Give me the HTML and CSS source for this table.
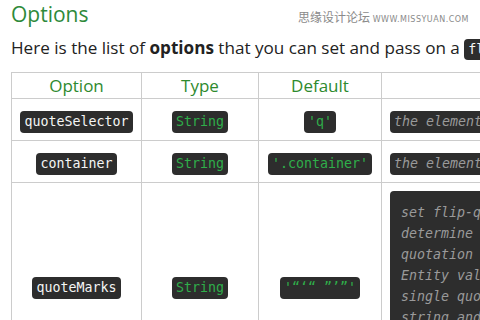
FILE: index.html
```html
<!DOCTYPE html>
<html lang="en">
<head>
    <meta charset="UTF-8">
    <title>Options</title>
    <link rel="stylesheet" href="styles.css">
</head>
<body>
    <div class="page">
        <div class="top">
            <h2>Options</h2>
            <div class="watermark">思缘设计论坛 <span>www.missyuan.com</span></div>
        </div>
        <p class="intro">Here is the list of <strong>options</strong> that you can set and pass on a <code>flipQuote()</code> call.</p>
        <table class="options">
            <colgroup>
                <col class="col-option">
                <col class="col-type">
                <col class="col-default">
                <col class="col-desc">
            </colgroup>
            <thead>
                <tr>
                    <th>Option</th>
                    <th>Type</th>
                    <th>Default</th>
                    <th>Description</th>
                </tr>
            </thead>
            <tbody>
                <tr>
                    <td><code>quoteSelector</code></td>
                    <td><code class="green">String</code></td>
                    <td><code class="green">'q'</code></td>
                    <td class="desc"><code class="note">the element that holds the quote text</code></td>
                </tr>
                <tr>
                    <td><code>container</code></td>
                    <td><code class="green">String</code></td>
                    <td><code class="green">'.container'</code></td>
                    <td class="desc"><code class="note">the element wrapping all quotes</code></td>
                </tr>
                <tr>
                    <td><code>quoteMarks</code></td>
                    <td><code class="green">String</code></td>
                    <td><code class="green">'“‘“ ”’”'</code></td>
                    <td class="desc"><pre class="note-block">set flip-quote to
determine the opening
quotation marks, HTML
Entity values in
single quotes, in a
string and separated
by a space for open
and close marks</pre></td>
                </tr>
            </tbody>
        </table>
    </div>
</body>
</html>
```

FILE: styles.css
```css
body {
    margin: 0;
    padding: 0;
    background-color: #ffffff;
    color: #222222;
    font-family: 'Open Sans', sans-serif;
    overflow: hidden;
}

.page {
    padding: 0 11px;
}

.top {
    display: flex;
    justify-content: space-between;
    align-items: center;
}

.top h2 {
    margin: 0;
    color: #2e8a3a;
    font-size: 21px;
    font-weight: 400;
    line-height: 28px;
}

.watermark {
    color: #8a8a8a;
    font-family: 'Noto Sans CJK SC', sans-serif;
    font-size: 12px;
    margin-top: 4px;
}

.watermark span {
    font-family: 'DejaVu Sans', sans-serif;
    font-size: 8px;
    text-transform: uppercase;
    letter-spacing: 0.5px;
}

.intro {
    margin: 6px 0 0;
    font-size: 17.1px;
    line-height: 28px;
    white-space: nowrap;
}

.intro strong {
    font-weight: 700;
}

code {
    display: inline-block;
    background-color: #2d2d2d;
    color: #f5f5f5;
    font-family: 'DejaVu Sans Mono', monospace;
    font-size: 13.3px;
    line-height: 22px;
    padding: 0 4px;
    border-radius: 4px;
    vertical-align: middle;
    white-space: nowrap;
}

.intro code {
    line-height: 21px;
}

code.green {
    color: #2fae4a;
}

.options {
    margin-top: 10px;
    border-collapse: collapse;
    table-layout: fixed;
    width: 700px;
}

.col-option {
    width: 130px;
}

.col-type {
    width: 117px;
}

.col-default {
    width: 123px;
}

.col-desc {
    width: 330px;
}

.options th,
.options td {
    border: 1px solid #cccccc;
    text-align: center;
    vertical-align: middle;
}

.options th {
    color: #2e8a2e;
    font-size: 17px;
    font-weight: 400;
    line-height: 25px;
    padding: 0;
}

.options td {
    padding: 12px 8px 7px;
    font-size: 13px;
    line-height: 22px;
}

.options td code {
    vertical-align: top;
}

.options td.desc {
    text-align: left;
}

.note {
    color: #9a9a9a;
    font-style: italic;
}

.note-block {
    margin: -4px 0 0;
    padding: 11px;
    background-color: #2d2d2d;
    color: #9a9a9a;
    font-family: 'DejaVu Sans Mono', monospace;
    font-size: 13.3px;
    font-style: italic;
    line-height: 21px;
    border-radius: 4px;
}
```
